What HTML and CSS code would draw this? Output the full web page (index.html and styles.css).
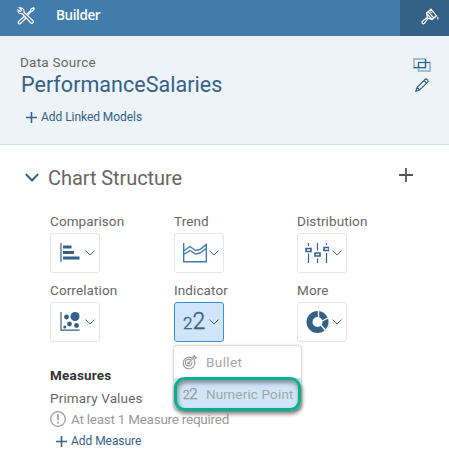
FILE: index.html
```html
<!DOCTYPE html>
<html lang="en">
<head>
<meta charset="utf-8">
<title>Builder</title>
<link rel="stylesheet" href="styles.css">
</head>
<body>
<svg class="defs" width="0" height="0">
  <symbol id="chev" viewBox="0 0 10 6"><path d="M.5 .5 5 5 9.500 .5"/></symbol>
  <symbol id="plus" viewBox="0 0 14 14"><path d="M7 0V14M0 7H14"/></symbol>
</svg>
<header class="top">
  <svg class="tools" viewBox="0 0 18 18"><path d="M5 6.500 13.500 15.500Q15 17 16 15.700Q17 14.500 15.500 13.300L7 5.300Q7.500 2 4.500 1L2.500 .8 4.500 3 3.300 4.500 1 3Q.8 7 5 6.500ZM10 7 13.500 3.500 14 2 16.500 .8 17.200 1.700 15.500 4 14.200 4.300 11 7.800M7.400 9.300 2 14Q.5 15.500 1.700 16.500Q2.700 17.500 4 16L9 11"/></svg>
  <h1>Builder</h1>
  <div class="brush-tab"><svg class="brush" viewBox="0 0 18 17"><path d="M10 1.200 15.500 7.800 11 11.500 7.300 10.200 3.500 15.200Q2.300 16.500 1.200 15.200Q.4 14 1.800 13L6.400 9.300 5.500 5.200ZM5.500 5.200 11 11.500M7.300 4 13 10.200M9.500 3.500 10.500 5"/><path d="M16.800 9v2.500"/></svg></div>
</header>
<section class="source">
  <div class="source-main">
    <div class="t label">Data Source</div>
    <div class="t model">PerformanceSalaries</div>
    <a class="add linked"><svg><use href="#plus"/></svg><span class="t">Add Linked Models</span></a>
  </div>
  <div class="source-actions">
    <svg class="blend" viewBox="0 0 18 14"><path class="pale" d="M1 1H12.500V10H1ZM5.500 4.500H17V13H5.500Z"/><path d="M1 9.500H12.500V1M5.500 10V4.500H17"/></svg>
    <svg class="pencil" viewBox="0 0 14 14"><path d="M.8 13.200 2 9.500 10 1.500Q11 .5 12 1.500L12.700 2.200Q13.500 3.100 12.600 4.100L4.600 12ZM2 9.500 4.600 12M9 2.500 11.600 5.100"/></svg>
  </div>
</section>
<main>
  <div class="section-head">
    <svg class="toggle" viewBox="0 0 14 9"><path d="M.8 1 7 7.500 13.200 1"/></svg>
    <h2 class="t">Chart Structure</h2>
    <svg class="bigplus"><use href="#plus"/></svg>
  </div>
  <div class="charts">
    <div class="chart"><div class="t name">Comparison</div><div class="btn">
      <svg class="ic" viewBox="0 0 24 20"><path d="M2 0V19"/><path class="f" d="M4 2.500h8.500v3H4zM4 8h11v3H4zM4 13.500h16.500v3H4z"/></svg><svg class="ch"><use href="#chev"/></svg></div></div>
    <div class="chart"><div class="t name">Trend</div><div class="btn">
      <svg class="ic" viewBox="0 0 24 20"><path class="trendline" d="M.7 0V18.700H23.300V1.500L17 6.500 12.500 7.500 7 3.500 .7 8M.7 11.500 7 7.500 12.500 11 17 10 23.300 5.500"/></svg><svg class="ch"><use href="#chev"/></svg></div></div>
    <div class="chart"><div class="t name">Distribution</div><div class="btn">
      <svg class="ic sliders" viewBox="0 0 24 20"><path d="M3.500 0V3M3.500 10.500V20M12.500 0V7.500M12.500 15.500V20M21.500 0V2M21.500 10V20"/><path class="thick" d="M1 5.500h5v3H1zM10 10h5v3h-5zM19 4.500h5v3h-5z"/></svg><svg class="ch"><use href="#chev"/></svg></div></div>
    <div class="chart"><div class="t name">Correlation</div><div class="btn">
      <svg class="ic" viewBox="0 0 24 20"><path d="M2 0V18.200H20.500"/><g class="f"><circle cx="7.500" cy="5" r="2.400"/><circle cx="16" cy="4.500" r="4.500"/><circle cx="10.500" cy="12" r="2.400"/><circle cx="17.500" cy="13.500" r="2.400"/><circle cx="5.800" cy="15" r="1.600"/></g></svg><svg class="ch"><use href="#chev"/></svg></div></div>
    <div class="chart"><div class="t name">Indicator</div><div class="btn active">
      <span class="num"><small>2</small>2</span><svg class="ch"><use href="#chev"/></svg></div>
      <div class="menu">
        <div class="item"><svg class="target" viewBox="0 0 15 15"><path d="M10 3A5.800 5.800 0 1 0 12 5M9 5.400A3.300 3.300 0 1 0 9.800 7M6.500 8.200 12 2.700M11 3.700V1.500L12.700 .3V2.200H14.500L13 4H11"/><circle cx="6.500" cy="8.200" r=".8"/></svg><span class="t bullet">Bullet</span></div>
        <div class="item selected"><span class="num mini"><small>2</small>2</span><span class="t numeric">Numeric Point</span></div>
        <div class="ring"></div>
      </div></div>
    <div class="chart"><div class="t name more">More</div><div class="btn">
      <svg class="ic donut" viewBox="0 0 24 24"><circle cx="11.500" cy="12" r="8"/><path d="M12.500 0V7M16 11 23 7.500M15 15 20 21"/></svg><svg class="ch"><use href="#chev"/></svg></div></div>
  </div>
  <div class="measures">
    <h3 class="t">Measures</h3>
    <div class="t primary">Primary Values</div>
    <div class="warn"><svg viewBox="0 0 16 16"><circle cx="8" cy="8" r="7.300"/><path d="M8 3.300V9.300M8 10.800V12.500"/></svg><span class="t">At least 1 Measure required</span></div>
    <a class="add measure"><svg><use href="#plus"/></svg><span class="t">Add Measure</span></a>
  </div>
</main>
</body>
</html>
```
FILE: styles.css
```css
* { box-sizing: border-box; }
body { margin: 0; width: 449px; height: 453px; overflow: hidden; background: #fff; color: #666; font: 13.5px/18px Roboto, "Liberation Sans", sans-serif; }
h1, h2, h3 { margin: 0; font-weight: 400; }
svg { display: block; flex: none; fill: none; stroke: #346187; stroke-width: 1.2; }
.defs { position: absolute; }
.t { white-space: nowrap; }
.top { display: flex; height: 36px; background: #427cac; padding-left: 17px; }
.tools { width: 18px; height: 18px; margin-top: 7px; stroke: #fff; stroke-width: 1.2; }
h1 { margin: 6px 0 0 21px; color: #fff; font: 600 13.5px/18px "Open Sans", sans-serif; letter-spacing: -.4px; }
.brush-tab { width: 49px; margin-left: auto; background: #346187; padding: 8px 0 0 21px; }
.brush { width: 18px; height: 17px; stroke: #fff; stroke-width: 1.2; }
.source { display: flex; justify-content: space-between; height: 109px; padding: 17px 18px 0 20px; background: #eef3f8; border-bottom: 1px solid #cbe0f1; }
.label { height: 19px; letter-spacing: .25px; }
.model { margin-left: 1px; color: #346187; font-size: 21.5px; line-height: 26px; letter-spacing: .03px; }
.add { display: flex; align-items: center; color: #346187; font-size: 12px; line-height: 16px; letter-spacing: -.05px; }
.add svg { width: 11px; height: 11px; margin-right: 4px; stroke-width: 2; }
.linked { margin: 11px 0 0 6px; }
.source-actions { padding-top: 5px; }
.blend { width: 18px; height: 14px; }
.pale { stroke: #8cb0ce; stroke-width: 1.5; }
.pencil { width: 14px; height: 14px; margin: 6px 0 0 2px; stroke-width: 1.2; }
.section-head { display: flex; height: 67px; padding: 20px 36px 0 25px; }
.toggle { width: 14px; height: 9px; margin-top: 8px; stroke-width: 1.9; }
h2 { margin-left: 9px; font-size: 20px; line-height: 26px; letter-spacing: -.07px; }
.bigplus { width: 14px; height: 14px; margin: 3px 0 0 auto; stroke: #555; stroke-width: 1.8; }
.charts { display: grid; grid-template-columns: 124px 123px 52px; grid-auto-rows: 61px; row-gap: 8px; padding-left: 50px; }
.chart { position: relative; }
.name { height: 21px; letter-spacing: .1px; }
.btn { display: flex; align-items: center; width: 50px; height: 40px; padding-left: 8px; border: 1px solid #e5e5e5; border-radius: 3px; background: #fff; }
.active { background: #d1e5f8; border-color: #3b92d5; }
.ic { width: 24px; height: 20px; }
.ic .f { fill: #346187; stroke: none; }
.ic .trendline { stroke: #427cac; stroke-width: 1.4; }
.ic.sliders { margin-left: -1px; margin-right: 1px; }
.thick { stroke-width: 1.6; }
.donut { height: 24px; }
.donut circle { stroke-width: 6; }
.donut path { stroke: #fff; stroke-width: 1.3; }
.ch { width: 10px; height: 6px; margin-left: 2px; stroke-width: .9; }
.num { display: flex; align-items: baseline; width: 24px; color: #346187; font-size: 23px; font-weight: 300; line-height: 24px; -webkit-text-stroke: .4px currentColor; }
.num small { font-size: 17px; }
.menu { position: absolute; left: 0; top: 65px; width: 127px; height: 64px; border-radius: 3px; background: #fff; box-shadow: 0 0 3px rgba(0,0,0,.4); z-index: 2; color: #a3a5a7; letter-spacing: .15px; }
.item { display: flex; align-items: center; height: 32px; padding-left: 8px; }
.selected { background: #d1e5f8; }
.target { width: 15px; height: 15px; margin-right: 9px; stroke: #999; stroke-width: 1.1; }
.bullet { letter-spacing: .4px; }
.mini { width: 23px; margin-left: 1px; color: #999; font-size: 15px; letter-spacing: -.5px; }
.mini small { font-size: 12px; }
.ring { position: absolute; left: 0; top: 31px; width: 127px; height: 34px; border: 3px solid #09ae8e; border-radius: 11px; box-shadow: 1px 3px 4px rgba(0,0,0,.5), inset 1px 3px 4px rgba(0,0,0,.4); }
.measures { padding: 24px 0 0 50px; }
h3 { color: #333; font-size: 13.5px; line-height: 18px; font-weight: 700; height: 23px; letter-spacing: .2px; }
.primary { height: 20px; letter-spacing: .15px; }
.warn { display: flex; align-items: center; color: #999; height: 20px; letter-spacing: -.25px; }
.warn svg { width: 16px; height: 16px; margin-right: 5px; stroke: #999; }
.warn path { stroke-width: 1.6; }
.measure { margin: 4px 0 0 6px; }
```
